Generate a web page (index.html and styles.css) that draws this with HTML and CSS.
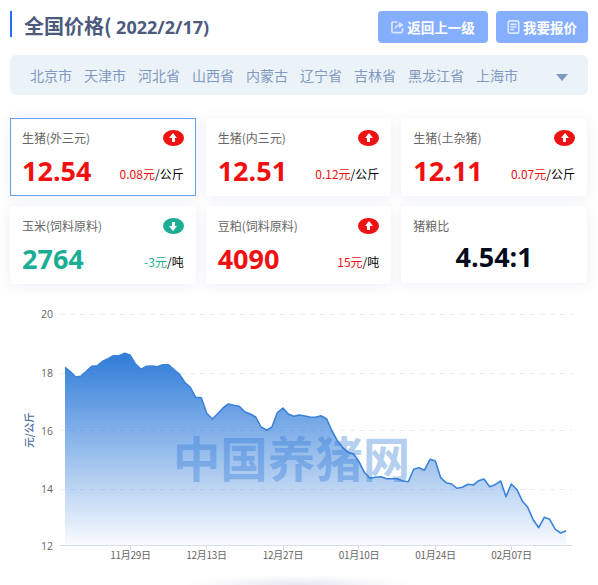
FILE: index.html
```html
<!DOCTYPE html>
<html lang="zh-CN">
<head>
<meta charset="utf-8">
<title>全国价格</title>
<link rel="stylesheet" href="styles.css">
</head>
<body>
<div class="page">
  <header class="head">
    <h1 class="title">全国价格( <span class="date">2022/2/17)</span></h1>
    <div class="actions">
      <a class="btn btn-back">
        <svg class="btn-icon" viewBox="0 0 14 14" fill="none" stroke="#dbe7ff" stroke-width="1.8"><path d="M7 1.6H2.4Q1 1.6 1 3v8.6Q1 13 2.4 13H11q1.4 0 1.4-1.4V8"/><path d="M4.5 9q.6-4 4.5-4.4M9 2.5l3.7 2.3L9 7.2z" fill="#dbe7ff" stroke-width="1.1"/></svg>
        返回上一级
      </a>
      <a class="btn btn-quote">
        <svg class="btn-icon" viewBox="0 0 14 16" fill="none" stroke="#dbe7ff" stroke-width="1.8"><rect x="1" y="1" width="12" height="14" rx="2"/><path d="M3.5 5h7M3.5 8h7M3.5 11h4"/></svg>
        我要报价
      </a>
    </div>
  </header>

  <nav class="regions">
    <a>北京市</a><a>天津市</a><a>河北省</a><a>山西省</a><a>内蒙古</a><a>辽宁省</a><a>吉林省</a><a>黑龙江省</a><a>上海市</a>
    <span class="caret"></span>
  </nav>

  <section class="cards">
    <article class="card card-active">
      <div class="card-top"><span class="label">生猪(外三元)</span><span class="badge badge-up"></span></div>
      <div class="card-main"><span class="value up">12.54</span><span class="delta"><span class="up">0.08元</span>/公斤</span></div>
    </article>
    <article class="card">
      <div class="card-top"><span class="label">生猪(内三元)</span><span class="badge badge-up"></span></div>
      <div class="card-main"><span class="value up">12.51</span><span class="delta"><span class="up">0.12元</span>/公斤</span></div>
    </article>
    <article class="card">
      <div class="card-top"><span class="label">生猪(土杂猪)</span><span class="badge badge-up"></span></div>
      <div class="card-main"><span class="value up">12.11</span><span class="delta"><span class="up">0.07元</span>/公斤</span></div>
    </article>
    <article class="card">
      <div class="card-top"><span class="label">玉米(饲料原料)</span><span class="badge badge-down"></span></div>
      <div class="card-main"><span class="value down">2764</span><span class="delta"><span class="down">-3元</span>/吨</span></div>
    </article>
    <article class="card">
      <div class="card-top"><span class="label">豆粕(饲料原料)</span><span class="badge badge-up"></span></div>
      <div class="card-main"><span class="value up">4090</span><span class="delta"><span class="up">15元</span>/吨</span></div>
    </article>
    <article class="card card-ratio">
      <div class="card-top"><span class="label">猪粮比</span></div>
      <div class="card-center"><span class="value ratio">4.54:1</span></div>
    </article>
  </section>
</div>

<svg class="chart" viewBox="0 290 598 285" width="598" height="285">
  <defs>
    <linearGradient id="areaFill" x1="0" y1="353" x2="0" y2="546" gradientUnits="userSpaceOnUse">
      <stop offset="0" stop-color="#2f7cd9"/>
      <stop offset="1" stop-color="#2f7cd9" stop-opacity=".03"/>
    </linearGradient>
  </defs>
  <g class="grid">
    <line x1="60" x2="572" y1="314.5" y2="314.5"/>
    <line x1="60" x2="572" y1="373.5" y2="373.5"/>
    <line x1="60" x2="572" y1="430.5" y2="430.5"/>
    <line x1="60" x2="572" y1="489.5" y2="489.5"/>
  </g>
  <polygon class="area" points="65,546 65,367.3 70,371.3 75.7,377 80.7,376.3 86,371.7 91.7,366.3 97.3,365.7 102.7,361.3 108,358.7 113.3,355.7 119,355.7 124.7,353.3 130,355 135.3,363.7 141,369.3 146.7,366.3 152.3,366 157.3,366.7 162.7,364.7 168.3,364.7 174,369.7 179.3,374 185,382.7 190.3,387.3 195.7,397.3 201.3,397.7 206.7,413.3 212.3,419 217.7,413.7 223,408 228.3,404 233.7,405.3 239.3,406.3 244.7,411.7 250.3,414 255.7,417 261,427 266.7,430.3 272,427 277.3,412.7 283,408 288.3,414 293.7,416.3 299.3,415 305,416 310,417 315.3,417.3 321,415.7 326.7,419 332,431 337.3,440.7 342.7,447.7 348.3,452.3 353.7,454 359,461.7 364.3,472.3 370,478.3 375.3,477.3 381,476.7 386.7,478.7 392,478.7 397.3,478.7 402.7,481 408.3,481.7 413.7,469.3 419,467.7 424.3,470.3 430,459.3 435.3,461 440.7,477.7 446,482.7 451.7,484 457,488.3 462.3,487.3 468,484.3 473.3,485 478.7,480.7 484,479 489.7,486.7 495,484.7 500.7,481 506,496.7 511.3,484 517,489.7 522.3,501 527.7,507.3 533.3,520 538.7,527.7 544.3,517.3 549.7,519.3 555.3,529.3 560.7,533 566,530.7 566,546"/>
  <polyline class="line" points="65,367.3 70,371.3 75.7,377 80.7,376.3 86,371.7 91.7,366.3 97.3,365.7 102.7,361.3 108,358.7 113.3,355.7 119,355.7 124.7,353.3 130,355 135.3,363.7 141,369.3 146.7,366.3 152.3,366 157.3,366.7 162.7,364.7 168.3,364.7 174,369.7 179.3,374 185,382.7 190.3,387.3 195.7,397.3 201.3,397.7 206.7,413.3 212.3,419 217.7,413.7 223,408 228.3,404 233.7,405.3 239.3,406.3 244.7,411.7 250.3,414 255.7,417 261,427 266.7,430.3 272,427 277.3,412.7 283,408 288.3,414 293.7,416.3 299.3,415 305,416 310,417 315.3,417.3 321,415.7 326.7,419 332,431 337.3,440.7 342.7,447.7 348.3,452.3 353.7,454 359,461.7 364.3,472.3 370,478.3 375.3,477.3 381,476.7 386.7,478.7 392,478.7 397.3,478.7 402.7,481 408.3,481.7 413.7,469.3 419,467.7 424.3,470.3 430,459.3 435.3,461 440.7,477.7 446,482.7 451.7,484 457,488.3 462.3,487.3 468,484.3 473.3,485 478.7,480.7 484,479 489.7,486.7 495,484.7 500.7,481 506,496.7 511.3,484 517,489.7 522.3,501 527.7,507.3 533.3,520 538.7,527.7 544.3,517.3 549.7,519.3 555.3,529.3 560.7,533 566,530.7"/>
  <g class="axis">
    <line x1="60" x2="572" y1="545.5" y2="545.5"/>
    <line x1="130.5" x2="130.5" y1="546" y2="550"/>
    <line x1="206.5" x2="206.5" y1="546" y2="550"/>
    <line x1="283.5" x2="283.5" y1="546" y2="550"/>
    <line x1="358.5" x2="358.5" y1="546" y2="550"/>
    <line x1="435.5" x2="435.5" y1="546" y2="550"/>
    <line x1="511.5" x2="511.5" y1="546" y2="550"/>
  </g>
  <g class="y-labels">
    <text x="53" y="318">20</text>
    <text x="53" y="377">18</text>
    <text x="53" y="435">16</text>
    <text x="53" y="493">14</text>
    <text x="53" y="550">12</text>
  </g>
  <g class="x-labels">
    <text x="130.5" y="559">11月29日</text>
    <text x="206.5" y="559">12月13日</text>
    <text x="283" y="559">12月27日</text>
    <text x="359" y="559">01月10日</text>
    <text x="435.5" y="559">01月24日</text>
    <text x="511.5" y="559">02月07日</text>
  </g>
  <text class="y-name" transform="translate(33 430) rotate(-90)">元/公斤</text>
  <text class="watermark" x="291.5" y="476.5">中国养猪网</text>
</svg>
<div class="next-panel"></div>
</body>
</html>
```

FILE: styles.css
```css
* { box-sizing: border-box; }
html, body { margin: 0; padding: 0; height: 585px; overflow: hidden; background: #fff; }
body { font-family: "Noto Sans CJK SC", "Open Sans", sans-serif; }

.page { padding: 11px 10px 0; }

.head { display: flex; justify-content: space-between; align-items: flex-start; height: 32px; }
.title {
  margin: 0; height: 26px; padding-left: 12px;
  border-left: 2px solid #2a6cf6;
  font-size: 20px; line-height: 30px; font-weight: 700; color: #4b5a7d;
  white-space: pre;
}
.date { font-family: "Open Sans", sans-serif; font-size: 18px; }
.actions { display: flex; gap: 8px; }
.btn {
  display: flex; align-items: center; justify-content: center; gap: 3px;
  height: 32px; background: #86aeff; border-radius: 4px;
  color: #fff; font-size: 13.5px; font-weight: 700;
}
.btn-back { width: 110px; }
.btn-quote { width: 92px; }
.btn-icon { width: 13px; height: 14px; flex: none; }

.regions {
  display: flex; align-items: center; gap: 12px;
  margin-top: 12px; height: 40px; padding: 0 20px;
  background: #ecf3f8; border-radius: 6px;
  font-size: 14px; color: #7f99c0;
}
.caret {
  margin-left: auto; margin-top: 5px;
  border-left: 6px solid transparent; border-right: 6px solid transparent;
  border-top: 7px solid #7f99c0;
}

.cards {
  display: grid; grid-template-columns: repeat(3, 1fr); grid-auto-rows: 78px; gap: 10px;
  margin: 23px 1px 6px 0;
}
.card {
  padding: 11px 12px 0; background: #fff; border-radius: 4px;
  box-shadow: 0 2px 14px rgba(70, 90, 150, .09);
}
.card-active { border: 1px solid #6a9ff0; border-radius: 0; padding: 10px 11px 0; }
.card-ratio { height: 77px; }
.card-top { display: flex; justify-content: space-between; align-items: center; height: 18px; }
.label { margin-bottom: 2px; font-size: 12px; color: #666; }
.badge { position: relative; width: 21px; height: 16px; border-radius: 50%; }
.badge::before {
  content: ""; position: absolute; left: 6.5px; border-left: 4px solid transparent; border-right: 4px solid transparent;
}
.badge::after { content: ""; position: absolute; left: 9px; width: 3px; height: 4px; background: #fff; }
.badge-up { background: #ee1212; }
.badge-up::before { top: 3px; border-bottom: 5px solid #fff; }
.badge-up::after { top: 8px; }
.badge-down { background: #1bae94; }
.badge-down::before { bottom: 3px; border-top: 5px solid #fff; }
.badge-down::after { bottom: 8px; }

.card-main { display: flex; justify-content: space-between; align-items: flex-end; margin-top: 6px; }
.card-center { display: flex; justify-content: center; margin-top: 4px; }
.value { font-family: "Open Sans", sans-serif; font-size: 27px; line-height: 36px; font-weight: 700; }
.delta { margin-bottom: 7px; font-size: 12px; line-height: 17px; color: #000; }
.up { color: #f01010; }
.down { color: #1bae94; }
.ratio { color: #020b1e; }

.chart { display: block; }
.grid line { stroke: #e7e9ef; stroke-width: 1; stroke-dasharray: 5 5; }
.area { fill: url(#areaFill); }
.line { fill: none; stroke: #3b82da; stroke-width: 1.6; stroke-linejoin: round; }
.axis line { stroke: #d8dfea; stroke-width: 1; }
.y-labels text { font: 10.5px "Open Sans", sans-serif; fill: #666; text-anchor: end; }
.x-labels text { font: 10px "Noto Sans CJK SC", sans-serif; fill: #666; text-anchor: middle; letter-spacing: -.3px; }
.y-name { font: 500 10.5px "Noto Sans CJK SC", sans-serif; fill: #4a6c9c; text-anchor: middle; }
.watermark {
  font: 700 47.5px "Noto Sans CJK SC", sans-serif;
  fill: #2a76d8; fill-opacity: .36; text-anchor: middle;
}
.next-panel {
  width: 230px; height: 10px; margin: 0 auto;
  background: radial-gradient(ellipse 50% 100% at 50% 100%, rgba(70, 90, 150, .14), rgba(70, 90, 150, 0));
}
```
